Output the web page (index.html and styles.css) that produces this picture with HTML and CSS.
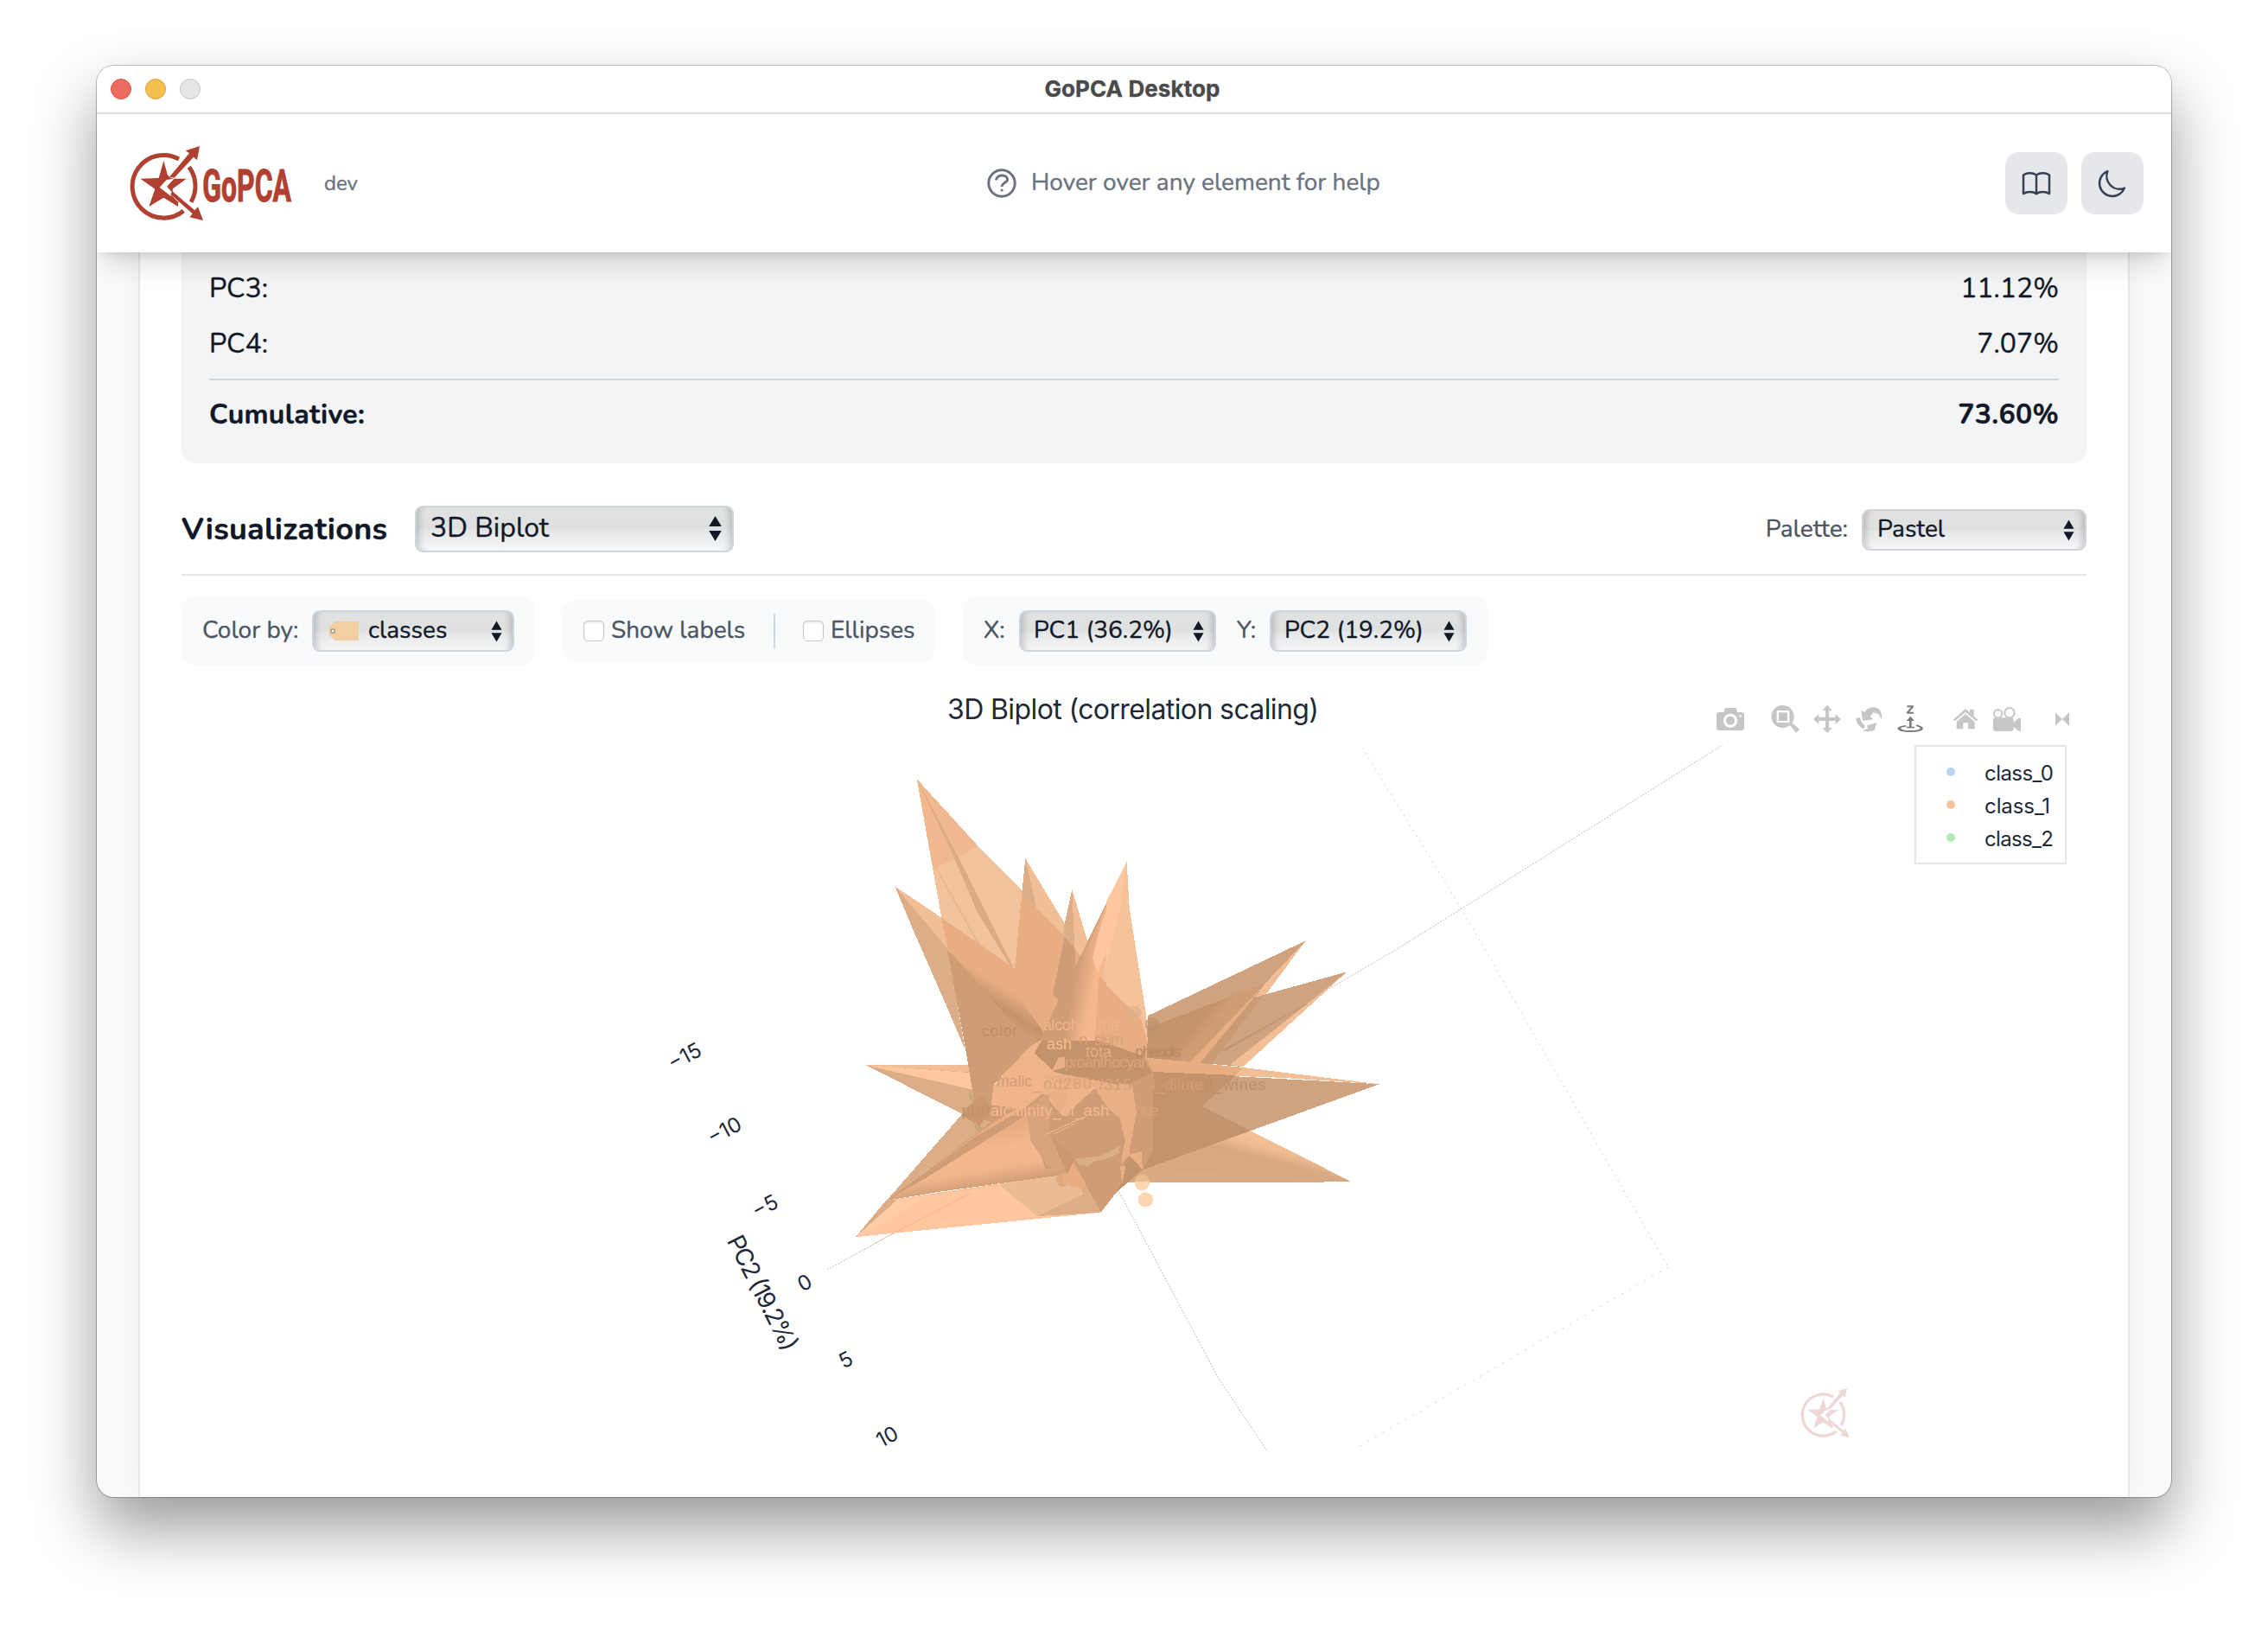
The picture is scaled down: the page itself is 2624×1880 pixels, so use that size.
FILE: index.html
```html
<!DOCTYPE html>
<html lang="en">
<head>
<meta charset="utf-8">
<title>GoPCA Desktop</title>
<link rel="stylesheet" href="styles.css">
</head>
<body>
<div class="window">
  <div class="titlebar">
    <div class="lights"><i class="light red"></i><i class="light yellow"></i><i class="light off"></i></div>
    <div class="title">GoPCA Desktop</div>
  </div>
  <header class="header">
    <div class="brand">
      <svg class="logo" viewBox="180 324 576 264" aria-label="GoPCA">
        <defs>
          <g id="mark">
            <path d="M351 372A109 109 0 1 0 367 552" fill="none" stroke="currentColor" stroke-width="15"/>
            <path d="M386 400A109 109 0 0 1 393 521" fill="none" stroke="currentColor" stroke-width="15"/>
            <path d="M298 378L312 428L326 440H380L310 466L332 487L325 497L348 523V537L298 506L247 537L268 476L217 440L281 438Z" fill="currentColor"/>
            <path d="M316 436L333 441L286 470L350 522L345 535L274 474Z" fill="currentColor"/>
            <path d="M308 444L284 470L322 500L328 488L310 468L334 440Z" fill="#fff"/>
            <path d="M310 467L333 444H372L330 475L328 487Z" fill="currentColor"/>
            <path d="M318 434L387 352L374 343L423 327L414 376L402 365L335 437Z" fill="currentColor"/>
            <path d="M322 494L328 484L406 550L417 538L435 585L388 574L398 562Z" fill="currentColor"/>
          </g>
        </defs>
        <use href="#mark"/>
        <text x="433" y="519" class="logo-text" textLength="308" lengthAdjust="spacingAndGlyphs">GoPCA</text>
      </svg>
      <span class="version">dev</span>
    </div>
    <div class="hint">
      <svg viewBox="0 0 36 36" fill="none" stroke="currentColor" stroke-width="3" stroke-linecap="round"><circle cx="18" cy="18" r="15.2"/><path d="M11.7 13.2C13 10 16 8.9 18.6 9c3.600.1 6 2 6 4.600 0 3.800-5.400 3.800-6.300 7.200"/><path d="M18.100 26v.100"/></svg>
      <span>Hover over any element for help</span>
    </div>
    <div class="actions">
      <button class="icon-btn"><svg viewBox="0 0 24 24"><path d="M12 6.253v13m0-13C10.832 5.477 9.246 5 7.500 5S4.168 5.477 3 6.253v13C4.168 18.477 5.754 18 7.500 18s3.332.477 4.500 1.253m0-13C13.168 5.477 14.754 5 16.500 5c1.747 0 3.332.477 4.500 1.253v13C19.832 18.477 18.247 18 16.500 18c-1.746 0-3.332.477-4.500 1.253"/></svg></button>
      <button class="icon-btn"><svg viewBox="0 0 24 24"><path d="M20.354 15.354A9 9 0 0 1 8.646 3.646 9.003 9.003 0 0 0 12 21a9.003 9.003 0 0 0 8.354-5.646z"/></svg></button>
    </div>
  </header>
  <main class="body">
    <section class="panel">
      <div class="variance">
        <div class="row"><span>PC3:</span><span>11.12%</span></div>
        <div class="row"><span>PC4:</span><span>7.07%</span></div>
        <div class="row total"><span>Cumulative:</span><span>73.60%</span></div>
      </div>
      <div class="viz-head">
        <h2>Visualizations</h2>
        <div class="select large"><span>3D Biplot</span><svg class="arrows" viewBox="0 0 14 28"><path d="M7 0l7 11.500H0zM7 28l7-11.500H0z"/></svg></div>
        <label class="palette">Palette:</label>
        <div class="select pal"><span>Pastel</span><svg class="arrows" viewBox="0 0 14 28"><path d="M7 1l6.500 11H.5zM7 27l6.500-11H.5z"/></svg></div>
      </div>
      <div class="controls">
        <div class="group colorby">
          <label>Color by:</label>
          <div class="select cls"><svg class="tag" viewBox="0 0 34 22"><path d="M0 6L7 0H34V22H7L0 16Z" fill="#f1cfa0"/><circle cx="4" cy="11" r="2.200" fill="#fff" stroke="#a08a78" stroke-width="1.300"/></svg><span>classes</span><svg class="arrows" viewBox="0 0 14 28"><path d="M7 1l6.500 11H.5zM7 27l6.500-11H.5z"/></svg></div>
        </div>
        <div class="group toggles">
          <i class="check"></i><label class="l1">Show labels</label><i class="sep"></i><i class="check"></i><label>Ellipses</label>
        </div>
        <div class="group axes">
          <label>X:</label>
          <div class="select pc"><span>PC1 (36.2%)</span><svg class="arrows" viewBox="0 0 14 28"><path d="M7 1l6.500 11H.5zM7 27l6.500-11H.5z"/></svg></div>
          <label>Y:</label>
          <div class="select pc"><span>PC2 (19.2%)</span><svg class="arrows" viewBox="0 0 14 28"><path d="M7 1l6.500 11H.5zM7 27l6.500-11H.5z"/></svg></div>
        </div>
      </div>
      <svg class="plot" viewBox="210 770 2204 962">
        <defs>
          <linearGradient id="gLeft" gradientUnits="userSpaceOnUse" x1="780" y1="600" x2="905" y2="625"><stop offset="0" stop-color="#d09c75"/><stop offset=".45" stop-color="#d09c75"/><stop offset="1" stop-color="#f4b88c"/></linearGradient>
          <linearGradient id="gRidge" gradientUnits="userSpaceOnUse" x1="610" y1="740" x2="560" y2="830"><stop offset="0" stop-color="#e8ae82"/><stop offset=".6" stop-color="#c4926b"/><stop offset="1" stop-color="#d09c75"/></linearGradient>
          <linearGradient id="gLow" gradientUnits="userSpaceOnUse" x1="500" y1="1180" x2="530" y2="1375"><stop offset="0" stop-color="#e8ae82"/><stop offset=".35" stop-color="#f5b88c"/><stop offset=".62" stop-color="#f1b78c"/><stop offset="1" stop-color="#c4926b"/></linearGradient>
          <linearGradient id="gTen" gradientUnits="userSpaceOnUse" x1="520" y1="1060" x2="500" y2="1135"><stop offset="0" stop-color="#f4c097"/><stop offset=".4" stop-color="#f2bc93"/><stop offset="1" stop-color="#d3a581"/></linearGradient>
          <linearGradient id="gSix" gradientUnits="userSpaceOnUse" x1="240" y1="640" x2="330" y2="720"><stop offset="0" stop-color="#c4926b"/><stop offset=".6" stop-color="#c4926b"/><stop offset="1" stop-color="#d09c75"/></linearGradient>
        </defs>
        <text class="plot-title" x="1311" y="832" text-anchor="middle" textLength="430">3D Biplot (correlation scaling)</text>

        <!-- scene axes -->
        <g fill="none" stroke="#999" stroke-width="1" stroke-dasharray="2 1.500" opacity=".65">
          <path d="M957 1469L1032 1428L1290 1288L1413 1217L1618 1097L1993 862"/>
          <path d="M1290 1370L1410 1595L1467 1680"/>
        </g>
        <g fill="none" stroke="#aaa" stroke-width="1" stroke-dasharray="2 5" opacity=".55">
          <path d="M1576 865L1690 1050L1930 1466"/><path d="M1930 1466L1570 1675" stroke-dasharray="2 8"/>
        </g>

        <!-- biplot mesh: left and upper spikes -->
        <g transform="translate(970 880) scale(.33333 .36352)" shape-rendering="crispEdges">
          <path fill="#dbad89" d="M95 969L480 1148L520 1100V969Z"/>
          <path fill="#f2be96" d="M95 969H520V1000L455 992Z"/>
          <path fill="#ffc79f" d="M95 969L455 993L500 1050L455 1045Z"/>
          <path fill="#f4c29a" d="M272 58L485 272L640 415L800 560L905 685L1020 790V1000H500L440 910L358 500Z"/>
          <path fill="#efb88f" d="M272 58L485 272L330 347Z"/>
          <path fill="#dcab85" d="M272 58L408 292L500 460L612 665L600 658L482 482L400 305Z"/>
          <path fill="#e9b890" d="M338 344L345 346L525 640L519 645Z"/>
          <path fill="#dbad89" d="M649 311L690 480L800 565L700 690L614 690L637 420Z"/>
          <path fill="#f2be96" d="M649 311L785 518L880 700L760 600L690 480Z"/>
          <path fill="#f2be96" d="M811 410L865 575L905 690L800 570Z"/>
          <path fill="#dbad89" d="M811 410L822 640L743 745L785 520Z"/>
          <path fill="#f2be96" d="M196 400L358 500L610 660L380 600Z"/>
          <path fill="#dbad89" d="M196 400L380 600L440 920L375 780L260 540Z"/>
          <path fill="#e8ae82" d="M358 500L612 662L637 425L785 558L900 690L1020 800V900H700L380 600Z"/>
          <path fill="#d09c75" d="M785 560L822 600L825 720L765 760L743 745Z"/>
          <path fill="#d09c75" d="M378 600L700 890L665 910L540 1030L530 1105L487 1170L440 910Z"/>
          <path fill="url(#gRidge)" d="M380 600L612 730L718 872L690 900L600 830Z"/>
          <path fill="#f4c29a" d="M1001 322L1010 468L1028 590L1068 806L1000 775L905 685L930 600Z"/>
          <path fill="url(#gLeft)" d="M1001 322L930 600L895 890H700L765 760L865 575Z"/>
          <path fill="#ffc79f" d="M1001 322L925 620L900 675L882 630L915 510Z"/>
          <path fill="#d09c75" d="M1001 322L862 578L855 610L900 520Z" opacity=".6"/>
          <path fill="#e8ae82" d="M905 685L1050 815V930L930 892H890Z"/>
          <path fill="#dbad89" d="M60 1516L500 1050L540 1120L180 1400Z"/>
          <path fill="#ffc79f" d="M60 1516L165 1400L790 1315L820 1280L985 1340L910 1438Z"/>
          <path fill="#ffcca5" d="M60 1516L180 1400L300 1390L100 1503Z"/>
          <path fill="#f2be96" d="M165 1400L790 1315L910 1438L690 1450L560 1352Z"/>
          <path fill="#dbad89" d="M60 1516L165 1400L205 1397Z"/>
          <path fill="#ebbc94" d="M560 1350L800 1315L860 1360L910 1438L690 1450Z"/>
          <path fill="#dbad89" d="M820 1280L990 1340L910 1438L690 1450L850 1380Z"/>
          <path fill="#d09c75" d="M170 1397L425 1130L500 1050L740 1060L600 1140Z"/>
          <path fill="#dbad89" d="M170 1397L430 1125L530 1150L300 1310Z"/>
          <path fill="url(#gLow)" d="M165 1400L540 1150L700 1065L740 1070L820 1275L790 1317L350 1372Z"/>
          <path fill="#d09c75" d="M165 1400L470 1200L730 1062L640 1135L300 1330Z"/>
          <path fill="#e9b38a" d="M65 1567L185 1505L450 1378L470 1374L190 1507Z" opacity=".5"/>
        </g>

        <!-- right spikes -->
        <g transform="translate(1280 960) scale(.33333)" shape-rendering="crispEdges">
          <path fill="#f5c29a" d="M71 111L80 270L100 400L138 640L150 800L60 760L0 560L20 300Z"/>
          <path fill="#f5c29a" d="M71 111L80 270L100 400L138 640L150 790L100 660L0 545V276Z"/>
          <path fill="#ffc79f" d="M71 111L45 290L0 470V250Z"/>
          <path fill="#e8ae82" d="M0 540L120 655L160 800L0 740Z"/>
          <path fill="#cfa380" d="M692 385L145 645L140 720L400 620L552 560Z"/>
          <path fill="#f2be96" d="M692 385L546 582L510 590L535 550Z"/>
          <path fill="#cfa380" d="M835 493L510 583L330 810L475 822Z"/>
          <path fill="#f2be96" d="M835 493L475 822L430 815L690 610Z"/>
          <path fill="#c4926b" d="M552 532L145 688L150 800L325 810L510 590Z"/>
          <path fill="url(#gSix)" d="M145 690L552 532L290 810L140 800Z"/>
          <path fill="#e8ae82" d="M552 532L510 585L325 812L290 808Z"/>
          <path fill="#c99a73" d="M510 585L542 577L362 818L325 810Z"/>
          <path fill="#ba8f6d" d="M400 765L690 605L700 603L410 770Z" opacity=".6"/>
          <path fill="#f2be96" d="M947 883L475 825L130 790L160 845L600 860Z"/>
          <path fill="#cfa380" d="M947 883L160 840V1110L127 1180L500 1045Z"/>
          <path fill="#e8ae82" d="M130 790L475 825L450 852L160 842Z"/>
          <path fill="#d6a883" d="M848 1220L740 1223H60V1150L127 1170L350 1090L500 1045Z"/>
          <path fill="url(#gTen)" d="M848 1220L500 1045L350 1095Z"/>
          <path fill="#c4926b" d="M160 840L450 852L330 960L500 1045L127 1180L60 1150Z"/>
          <path fill="#e8ae82" d="M60 1198L130 1178L720 1212L740 1223H60Z" opacity=".35"/>
          <circle cx="159" cy="676" r="25" fill="#b98d6e" opacity=".6"/>
          <circle cx="97" cy="636" r="25" fill="#deb08a" opacity=".7"/>
          <circle cx="136" cy="1284" r="26" fill="#ffd6b1"/>
          <circle cx="124" cy="1226" r="26" fill="#ffd6b1"/>
          <path d="M98 1222A26 26 0 0 1 150 1222Z" fill="#e9b98f"/>
        </g>

        <!-- core of the mesh -->
        <g transform="translate(1110 1140) scale(.33333)" shape-rendering="crispEdges">
          <path fill="#d09c75" d="M120 350L290 200L480 190L640 245L672 300V570L636 640L600 625L545 718L492 787L395 615L300 640L230 430Z"/>
          <path fill="#c4926b" d="M560 690L575 620L590 585L636 640L545 718Z"/>
          <path fill="#efb489" d="M110 415L118 348L245 212L280 192L330 300L480 350L360 455L290 375L220 430Z"/>
          <path fill="#c4926b" d="M260 235L285 192H485L635 245L668 302L560 355L470 340L330 300Z"/>
          <path fill="#eab085" d="M345 248H365V285L320 298Z"/>
          <path fill="#eab085" d="M300 320L370 310L530 340L612 370L615 440L585 575L565 470L510 420L470 355L375 350Z"/>
          <path fill="#eab085" d="M305 375L375 345L372 390L360 455Z"/>
          <path fill="#eab085" d="M556 340L600 345L615 440L590 590L560 620L575 540L555 450Z"/>
          <path fill="#d09c75" d="M600 345L668 303L672 570L636 640L590 575L615 440Z"/>
          <path fill="#eab085" d="M588 588L632 575L636 640Z"/>
          <path fill="#d8a27a" d="M230 430L300 378L312 382L315 520L360 620L380 655L310 632L248 540Z"/>
          <path fill="#c99870" d="M318 520L400 600L395 615L375 655L355 610Z"/>
          <path fill="#dbad89" d="M400 602L490 592L555 558V582L520 600L470 610L430 640Z"/>
          <g fill="#d09c75"><circle cx="430" cy="650" r="26"/><circle cx="480" cy="640" r="30"/><circle cx="530" cy="630" r="30"/><circle cx="490" cy="685" r="30"/><circle cx="535" cy="680" r="26"/><circle cx="484" cy="720" r="24"/></g>
          <g fill="#e0aa80"><circle cx="360" cy="675" r="24"/><circle cx="395" cy="675" r="24"/></g>
          <path fill="#e8ae82" d="M395 615L440 690L425 705L375 695L355 660L375 655Z"/>
          <path fill="#eab085" d="M558 628H577L565 690Z"/>
          <path fill="none" stroke="#eab085" stroke-width="4" stroke-dasharray="60 6" d="M298 518L438 455M328 516L400 480"/>
          <path fill="#c9966e" d="M5 448L80 375L110 430L70 490Z"/>
          <path fill="#c9a673" d="M40 365A18 20 0 0 0 48 400ZM55 475A16 18 0 0 0 85 498Z"/>
          <g class="mesh-labels">
            <text x="77" y="178" fill="#c08d67" textLength="125">color</text>
            <text x="290" y="156" fill="#eeb489" textLength="264">alcohol_ine</text>
            <text x="415" y="206" fill="#d8a178" textLength="155">n_sium</text>
            <text x="303" y="221" fill="#f4bd93" textLength="87">ash</text>
            <text x="438" y="250" fill="#e5ab81" textLength="90">tota</text>
            <text x="610" y="248" fill="#b98863" textLength="160">phenols</text>
            <text x="365" y="286" fill="#d9a37b" textLength="295">proanthocyan</text>
            <text x="128" y="350" fill="#d29e76" textLength="125">malic</text>
            <text x="258" y="360" fill="#d9a37b" textLength="200">_od280</text>
            <text x="485" y="364" fill="#d6a078" textLength="112">/315</text>
            <text x="605" y="364" fill="#d39e76" textLength="240">_of_dilute</text>
            <text x="850" y="364" fill="#bd8d68" textLength="213">d_wines</text>
            <text x="8" y="452" fill="#c69168" textLength="95">prol</text>
            <text x="108" y="452" fill="#f2ba8f" textLength="412">alcalinity_of_ash</text>
            <text x="612" y="452" fill="#d9a37b" textLength="80">hue</text>
          </g>
        </g>

        <!-- PC2 axis labels -->
        <g class="tick">
          <text transform="translate(792 1222) rotate(-28)" y="8.500">−15</text>
          <text transform="translate(838 1308) rotate(-28)" y="8.500">−10</text>
          <text transform="translate(885 1395.500) rotate(-28)" y="8.500">−5</text>
          <text transform="translate(931 1484) rotate(-28)" y="8.500">0</text>
          <text transform="translate(978.500 1573) rotate(-28)" y="8.500">5</text>
          <text transform="translate(1026.500 1662) rotate(-28)" y="8.500">10</text>
          <text class="axis-name" transform="translate(882 1496) rotate(63)" y="9.500" textLength="146">PC2 (19.2%)</text>
        </g>

        <!-- mode bar -->
        <g transform="translate(1940 560) scale(.33333)" fill="#c6c6c6">
          <path fill-rule="evenodd" d="M148 792H163L168 777H206L210 792H224Q234 792 234 802V845Q234 855 224 855H148Q138 855 138 845V802Q138 792 148 792ZM186 797A24 24 0 1 0 186 846A24 24 0 1 0 186 797ZM221 801A4 4 0 1 0 221 809A4 4 0 1 0 221 801Z"/><circle cx="186" cy="821" r="15"/>
          <path fill-rule="evenodd" d="M368 768A39 39 0 1 0 392 837L414 863L426 851L400 829A39 39 0 0 0 368 768ZM347 786H391V828H347Z"/><path d="M354 793H384V822H354Z"/>
          <path d="M522 767L539 786H528V809H551V798L570 816L551 834V822H528V846H539L522 864L505 846H516V822H493V834L474 816L493 798V809H516V786H505Z"/>
          <path d="M640 785L651 792Q664 773 686 775Q708 779 711 800V820Q704 796 682 793L671 806L682 817L645 822ZM621 813L636 810Q640 832 654 839L648 850Q624 838 621 813ZM660 838L694 828L686 854Q665 863 644 855L663 850Z"/>
          <path d="M676 782Q704 788 708 818L702 806Q696 788 676 782Z" fill="#fff" opacity=".7"/>
          <g fill="#7c7c7c"><path d="M799 769H822V774L807 791H822V797H798V791L813 775H799ZM811 806L825 822H815V844H807V822H797Z"/><path d="M797 842H825V847H797Z"/><path d="M795 837Q765 842 766 849Q770 861 811 861Q852 861 855 849Q855 842 832 835L830 840Q846 845 845 849Q840 855 811 855Q782 855 777 848Q777 844 795 842Z"/></g>
          <path d="M959 818L1002 780L1017 793V782H1031V806L1045 818L1039 823L1002 791L965 823Z"/><path d="M971 825L1002 798L1034 825V850H1011V829H994V850H971Z"/>
          <path fill-rule="evenodd" d="M1115 780A17 17 0 1 0 1115 814A17 17 0 1 0 1115 780ZM1115 786A11 11 0 1 1 1115 808A11 11 0 1 1 1115 786ZM1155 774A20 20 0 1 0 1155 814A20 20 0 1 0 1155 774ZM1155 780A14 14 0 1 1 1155 808A14 14 0 1 1 1155 780Z"/><path d="M1107 811H1160Q1169 812 1169 822V828L1186 812H1194V857H1186L1169 842V849Q1167 858 1158 858H1107Q1098 857 1098 849V820Q1098 811 1107 811Z"/>
          <path d="M1314 792L1337 816L1314 840ZM1362 792L1338 816L1362 840Z"/>
        </g>

        <!-- legend -->
        <rect x="2216" y="863" width="174" height="136" fill="#fff" stroke="#e5e7eb" stroke-width="2"/>
        <circle cx="2257" cy="893" r="5" fill="#b9d2f3"/><circle cx="2257" cy="931" r="5" fill="#f6c39d"/><circle cx="2257" cy="969" r="5" fill="#b4e8b5"/>
        <g class="legend"><text x="2296" y="903" textLength="80">class_0</text><text x="2296" y="941" textLength="76">class_1</text><text x="2296" y="979" textLength="80">class_2</text></g>

        <use href="#mark" class="watermark" transform="translate(2109.300 1637) scale(.221) translate(-298 -467)"/>
      </svg>
    </section>
  </main>
</div>
</body>
</html>
```
FILE: styles.css
```css
* { box-sizing: border-box; }
body {
  margin: 0;
  padding: 76px 112px 0;
  height: 1880px;
  background: #fff;
  font-family: "Nunito", "Lato", "Open Sans", sans-serif;
  color: #111827;
  overflow: hidden;
  -webkit-text-stroke-width: .35px;
}
.window {
  width: 2400px;
  height: 1656px;
  border-radius: 20px;
  overflow: hidden;
  background: #f8fafc;
  box-shadow: 0 0 0 1px rgba(0, 0, 0, .25), 0 36px 72px rgba(0, 0, 0, .4);
  display: flex;
  flex-direction: column;
}
.titlebar {
  height: 56px;
  flex: none;
  background: #fff;
  border-bottom: 2px solid #dedede;
  display: grid;
  grid-template-columns: 1fr auto 1fr;
  align-items: center;
}
.lights { display: flex; gap: 16px; padding-left: 16px; }
.light { width: 24px; height: 24px; border-radius: 50%; border: 1px solid; }
.red { background: #ec6a5e; border-color: #d6544a; }
.yellow { background: #f4bf4f; border-color: #d9a23c; }
.off { background: #e5e5e5; border-color: #c4c4c4; }
.title {
  font: 700 26px/32px "Inter", sans-serif;
  color: #4a4a4a;
  margin: 0 2px 0 -2px;
  letter-spacing: .1px;
}
.header {
  height: 160px;
  flex: none;
  background: #fff;
  display: flex;
  align-items: center;
  justify-content: space-between;
  padding: 0 32px 0 38px;
  position: relative;
  box-shadow: 0 20px 30px -6px rgba(0, 0, 0, .12), 0 8px 12px -8px rgba(0, 0, 0, .1), 0 10px 24px -12px rgba(0, 0, 0, .08);
}
.brand, .hint, .actions { display: flex; align-items: center; }
.brand { width: 608px; }
.logo { width: 192px; height: 88px; color: #b04131; }
.logo-text { font: 700 154px "Roboto", sans-serif; fill: #b04131; stroke: #b04131; stroke-width: 3px; }
.version { margin-left: 33px; font-size: 24px; color: #6b7280; }
.hint { gap: 16px; color: #6b7280; font-size: 28px; white-space: nowrap; }
.hint span { padding-bottom: 2px; }
.hint svg { width: 36px; height: 36px; }
.actions { width: 500px; justify-content: flex-end; gap: 16px; }
.icon-btn {
  width: 72px;
  height: 72px;
  border: 0;
  border-radius: 16px;
  background: #e5e7eb;
  display: grid;
  place-items: center;
  padding: 0;
}
.icon-btn svg {
  width: 40px;
  height: 40px;
  fill: none;
  stroke: #374151;
  stroke-width: 1.5;
  stroke-linecap: round;
  stroke-linejoin: round;
}
.body { flex: 1; padding: 0 48px; }
.panel {
  height: 1440px;
  padding: 0 48px;
  background: #fff;
  border: solid #e5e7eb;
  border-width: 0 2px;
  box-shadow: 0 0 30px rgba(0, 0, 0, .05);
}
.variance {
  background: #f3f4f6;
  border-radius: 0 0 16px 16px;
  padding: 18px 32px 32px;
  font-size: 32px;
}
.row { display: flex; justify-content: space-between; height: 48px; line-height: 48px; margin-bottom: 16px; }
.total {
  height: 66px;
  border-top: 2px solid #d1d5db;
  padding-top: 16px;
  margin: 16px 0 0;
  font-weight: 700;
  letter-spacing: .3px;
}
.viz-head {
  margin-top: 48px;
  height: 82px;
  padding-bottom: 24px;
  border-bottom: 2px solid #e5e7eb;
  display: flex;
  align-items: center;
}
h2 { margin: 0; width: 270px; font-size: 36px; font-weight: 700; white-space: nowrap; letter-spacing: .25px; }
.select {
  height: 48px;
  border: 2px solid #d1d5db;
  border-radius: 9px;
  background: linear-gradient(#e1e3e2 0, #dfe1e0 50%, #e4e5e6 52%, #f6f7f9 100%);
  box-shadow: inset 10px 0 8px -8px rgba(0, 0, 0, .22), inset -10px 0 8px -8px rgba(0, 0, 0, .22);
  display: flex;
  align-items: center;
  font-size: 28px;
  color: #111827;
  white-space: nowrap;
}
.select span, .group label { padding-bottom: 2px; }
.select .arrows { width: 13px; height: 27px; margin-left: auto; fill: #111827; }
.select.large { width: 369px; height: 54px; font-size: 32px; padding: 0 12px 0 16px; margin-top: -1px; }
.select.large .arrows { width: 15px; height: 29px; }
.palette { margin-left: auto; margin-right: 16px; font-size: 28px; color: #4b5563; }
.select.pal { width: 260px; padding: 0 12px 0 16px; margin-top: 2px; }
.controls { margin-top: 24px; height: 80px; display: flex; align-items: center; }
.group {
  height: 80px;
  border-radius: 16px;
  background: #f9fafb;
  display: flex;
  align-items: center;
  font-size: 28px;
  color: #4b5563;
  white-space: nowrap;
}
.colorby { width: 409px; padding-left: 24px; margin-right: 32px; }
.colorby label { width: 127px; }
.select.cls { width: 234px; padding: 0 12px 0 18px; }
.tag { width: 34px; height: 22px; margin-right: 11px; }
.toggles { width: 431px; height: 72px; padding-left: 24px; margin-right: 32px; }
.check {
  width: 24px;
  height: 24px;
  border-radius: 5px;
  border: 1px solid #c6c6c6;
  background: #fff;
  box-shadow: inset 0 2px 2px rgba(0, 0, 0, .08);
  margin-right: 8px;
}
.l1 { width: 188px; }
.sep { width: 2px; height: 40px; background: #d1d5db; margin-right: 32px; }
.axes { width: 607px; padding-left: 24px; }
.axes label { width: 41px; }
.axes .select + label { width: 38px; margin-left: 24px; }
.select.pc { width: 228px; padding: 0 12px 0 15px; }
.plot { display: block; width: 2204px; height: 962px; }
.plot-title { font: 400 32px "Inter", sans-serif; fill: #1f2937; }
.tick { font: 400 24px "Inter", sans-serif; fill: #1f2937; text-anchor: middle; }
.axis-name { font-size: 28px; }
.legend { font: 400 24px "Inter", sans-serif; fill: #1f2937; }
.mesh-labels { font: 400 54px "Liberation Sans", Arial, sans-serif; }
.watermark { color: #b04131; opacity: .2; }
```
